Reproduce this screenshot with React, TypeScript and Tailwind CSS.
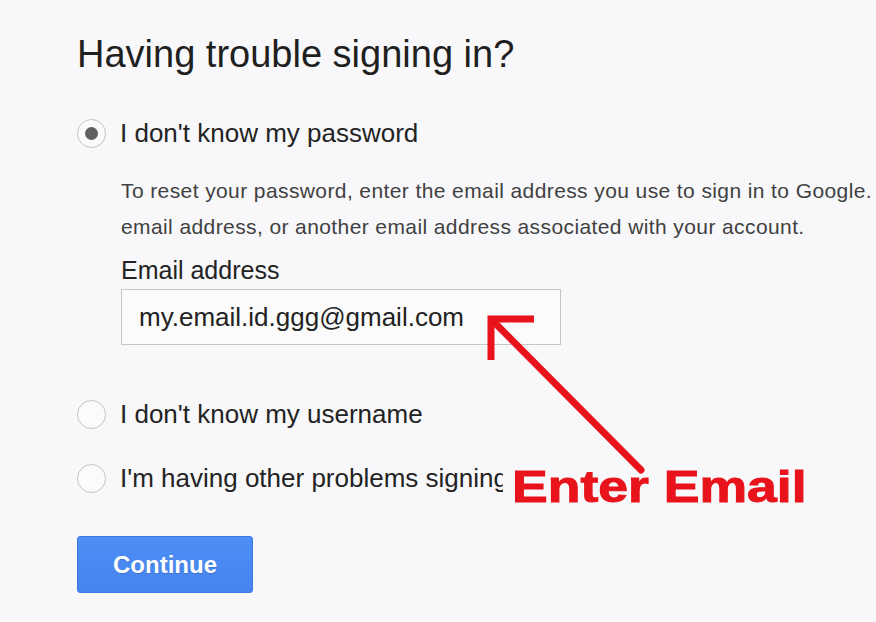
import React, { useState } from 'react';

const options = [
  { id: 'password', label: "I don't know my password" },
  { id: 'username', label: "I don't know my username" },
  { id: 'other', label: "I'm having other problems signing in" },
];

const Radio: React.FC<{ checked: boolean }> = ({ checked }) => (
  <span className="flex h-[29px] w-[29px] shrink-0 items-center justify-center rounded-full border border-[#c3c3c3] bg-[#fbfbfb]">
    {checked && <span className="h-[13px] w-[13px] rounded-full bg-[#606060]" />}
  </span>
);

const RadioRow: React.FC<{ label: string; checked: boolean; onPick: () => void; className?: string }> = ({
  label,
  checked,
  onPick,
  className = '',
}) => (
  <div className={`flex h-[40px] items-center gap-[14px] cursor-pointer ${className}`} onClick={onPick}>
    <Radio checked={checked} />
    <span className="whitespace-nowrap text-[26px] leading-[40px] text-[#232323]">{label}</span>
  </div>
);

export default function App() {
  const [picked, setPicked] = useState('password');
  const [email, setEmail] = useState('my.email.id.ggg@gmail.com');

  return (
    <div className="relative h-[622px] w-full overflow-hidden bg-[#f8f8fa] pl-[77px] pt-[32px] font-['Liberation_Sans',Arial,sans-serif]">
      {/* Title */}
      <h1 className="whitespace-nowrap text-[38px] leading-[44px] text-[#1f1f1f]">Having trouble signing in?</h1>

      {/* Option 1 + email form */}
      <RadioRow
        className="mt-[37px]"
        label={options[0].label}
        checked={picked === 'password'}
        onPick={() => setPicked('password')}
      />
      <div className="pl-[44px]">
        <p className="mt-[20px] whitespace-nowrap text-[21px] leading-[36px] tracking-[0.4px] text-[#414141]">
          To reset your password, enter the email address you use to sign in to Google.
          <br />
          email address, or another email address associated with your account.
        </p>
        <label className="mt-[9px] block text-[25px] leading-[32px] text-[#232323]">Email address</label>
        <div className="mt-[3px] flex h-[56px] w-[440px] items-center border border-[#c6c6c6] bg-[#fbfbfb] pl-[17px]">
          <input
            value={email}
            onChange={(e) => setEmail(e.target.value)}
            className="w-full bg-transparent text-[26px] text-[#222] outline-none"
          />
        </div>
      </div>

      {/* Other options */}
      <RadioRow
        className="mt-[49px]"
        label={options[1].label}
        checked={picked === 'username'}
        onPick={() => setPicked('username')}
      />
      <RadioRow
        className="mt-[24px]"
        label={options[2].label}
        checked={picked === 'other'}
        onPick={() => setPicked('other')}
      />

      <button className="mt-[38px] flex h-[57px] w-[176px] items-center justify-center rounded-[3px] border border-[#3a78e6] bg-gradient-to-b from-[#4d8ff5] to-[#4683ee] text-[24px] font-bold text-white [text-shadow:0_1px_1px_rgba(0,0,0,0.15)]">
        Continue
      </button>

      {/* Annotation label */}
      <div className="absolute left-[503px] top-[462px] h-[50px] bg-[#f8f8fa] pl-[9px] pr-[20px]">
        <span className="inline-block origin-left scale-x-[1.19] whitespace-nowrap text-[45px] font-bold leading-[50px] text-[#e8131b] [-webkit-text-stroke:1px_#e8131b]">
          Enter Email
        </span>
      </div>

      {/* Annotation arrow */}
      <svg className="absolute left-0 top-0" width="876" height="622" viewBox="0 0 876 622">
        <line x1="494" y1="322" x2="641" y2="470" stroke="#e8131b" strokeWidth="7" strokeLinecap="round" />
        <path d="M534 319 H491 V360" fill="none" stroke="#e8131b" strokeWidth="7" />
      </svg>
    </div>
  );
}
